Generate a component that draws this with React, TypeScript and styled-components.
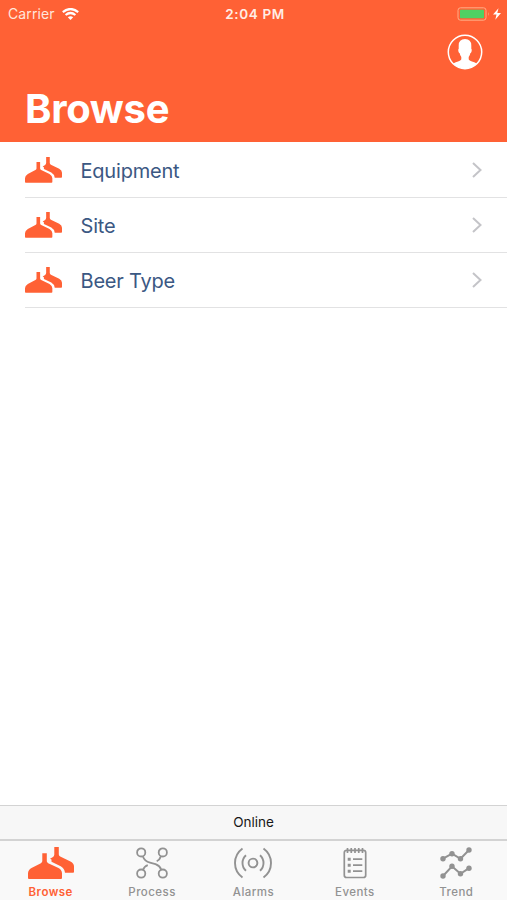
import React from "react";
import styled, { createGlobalStyle } from "styled-components";

const GlobalStyle = createGlobalStyle`
  * { box-sizing: border-box; }
  body { margin: 0; background: #fff; font-family: Inter, "Liberation Sans", sans-serif; }
`;

const Screen = styled.div`
  display: flex;
  flex-direction: column;
  height: 900px;
  width: 507px;
  overflow: hidden;
  background: #fff;
`;

const Header = styled.header`
  display: flex;
  flex-direction: column;
  height: 142px;
  flex: none;
  background: #ff6135;
  color: #fff;
`;

const StatusBar = styled.div`
  display: grid;
  grid-template-columns: 1fr auto 1fr;
  align-items: center;
  height: 27px;
  padding: 0 5px 0 8px;
`;

const Carrier = styled.div`
  display: flex;
  align-items: center;
  gap: 7px;
  font-size: 14px;
  line-height: 18px;
  letter-spacing: 0.1px;
  color: #ffe6dc;
`;

const Clock = styled.div`
  font-size: 13.5px;
  line-height: 18px;
  font-weight: 600;
  letter-spacing: 0.65px;
  color: #ffede5;
`;

const Power = styled.div`
  display: flex;
  justify-content: flex-end;
`;

const Actions = styled.div`
  display: flex;
  justify-content: flex-end;
  height: 50px;
  padding: 7px 24px 0 0;
`;

const Title = styled.h1`
  margin: 8px 0 0 25px;
  font-size: 40px;
  line-height: 48px;
  font-weight: 700;
  letter-spacing: -0.3px;
`;

const List = styled.main`
  flex: 1;
  padding: 1px 0 0 25px;
`;

const Row = styled.div`
  display: flex;
  align-items: center;
  height: 55px;
  padding-right: 24px;
  border-bottom: 1px solid #e2e2e3;
`;

const RowLabel = styled.span`
  flex: 1;
  margin-left: 18.5px;
  padding-top: 2px;
  font-size: 20px;
  line-height: 26px;
  letter-spacing: -0.2px;
  color: #3b5883;
`;

const Connection = styled.div`
  display: flex;
  align-items: center;
  justify-content: center;
  height: 34px;
  flex: none;
  padding-bottom: 1px;
  background: #f7f7f7;
  border-top: 1px solid #d3d3d3;
  font-size: 13.5px;
  color: #171717;
`;

const TabBar = styled.nav`
  display: grid;
  grid-template-columns: repeat(5, 1fr);
  height: 61px;
  flex: none;
  background: #f9f9f9;
  border-top: 2px solid #d3d3d3;
`;

const Tab = styled.div<{ $active?: boolean }>`
  display: flex;
  flex-direction: column;
  align-items: center;
  color: ${(p) => (p.$active ? "#ff6135" : "#929292")};
`;

const TabIcon = styled.div`
  display: flex;
  align-items: center;
  justify-content: center;
  height: 44px;
`;

const TabLabel = styled.span<{ $active?: boolean }>`
  font-size: 11.5px;
  line-height: 14px;
  font-weight: ${(p) => (p.$active ? 600 : 500)};
  letter-spacing: 0.45px;
`;

const Tanks = ({ width, color = "#ff6135" }: { width: number; color?: string }) => (
  <svg width={width} height={(width * 32) / 46} viewBox="0 0 46 32" fill={color}>
    <path d="M14.3 6.3H18.8V14.2Q19 15.4 20.2 16.2L30.5 21Q34 23 34 26.5V31Q34 32 33 32H1Q0 32 0 31V26.5Q0 23 3.5 21L12.9 16.2Q14.1 15.4 14.3 14.2Z" />
    <path d="M26.3 0H30.8V7.5Q31 8.8 32.2 9.5L42.5 14.5Q46 16.5 46 19.5V25Q46 25.8 45 25.8H37Q36.5 21.5 32.7 19.3L23.5 14.8V12.6L22 11.8L25 10Q26.2 9 26.3 7.5Z" />
  </svg>
);

const Wifi = () => (
  <svg width="17" height="12" viewBox="0 0 17 12" fill="none" stroke="#fff" strokeWidth="2.2">
    <path d="M0.8 4.2Q8.5-2.2 16.2 4.2M3.6 7Q8.5 3 13.4 7" />
    <path d="M8.5 12L5.8 9.2Q8.5 7.2 11.2 9.2Z" fill="#fff" stroke="none" />
  </svg>
);

const Battery = () => (
  <svg width="45" height="14" viewBox="0 0 45 14">
    <rect x="1" y="0.8" width="28" height="12.4" rx="2.5" fill="none" stroke="#ffad86" />
    <rect x="3" y="2.7" width="24" height="8.6" rx="0.8" fill="#4fd163" />
    <path d="M31 5Q32.5 7 31 9Z" fill="#ffad86" />
    <path d="M41.5 1.2L36 7.6H39.5L38.3 12.7L44 6H40.3Z" fill="#fff" />
  </svg>
);

const Profile = () => (
  <svg width="36" height="36" viewBox="0 0 36 36">
    <circle cx="18" cy="18" r="16.7" fill="none" stroke="#fff" strokeWidth="1.5" />
    <path d="M11.7 11.5Q11.7 5 18 5Q24.3 5 24.3 11.5V14.7Q25.2 15 24.5 17.8Q24.1 19 23.3 19.2Q23 21.5 21.7 23V25.3Q22 27 27.3 28.2Q29 28.8 30 29.6Q25 34.7 18 34.7Q11 34.7 6 29.6Q7 28.8 8.7 28.2Q14 27 14.3 25.3V23Q13 21.5 12.7 19.2Q11.9 19 11.5 17.8Q10.8 15 11.7 14.7Z" fill="#fff" />
  </svg>
);

const Chevron = () => (
  <svg width="12" height="18" viewBox="0 0 12 18" fill="none" stroke="#c4c4c8" strokeWidth="2">
    <path d="M2 2L9.5 9L2 16" />
  </svg>
);

const Process = () => (
  <svg width="32" height="32" viewBox="0 0 32 32" fill="none" stroke="currentColor" strokeWidth="1.8">
    <circle cx="5.2" cy="5.4" r="4.1" /><circle cx="26.8" cy="5.4" r="4.1" />
    <circle cx="5.2" cy="26.6" r="4.1" /><circle cx="26.8" cy="26.6" r="4.1" />
    <path d="M6.8 9.2Q8.5 14.2 14 15.6L19.5 17.2Q23.8 18.7 25.3 22.8M25 9.1Q23.8 12.8 20.7 14.2M7 22.9Q8.3 19.2 11.8 18.1" />
  </svg>
);

const Alarm = () => (
  <svg width="38" height="32" viewBox="0 0 38 32" fill="none" stroke="currentColor" strokeWidth="1.9">
    <circle cx="19" cy="16" r="4.4" />
    <path d="M12 8.2Q8.5 11.3 8.5 16Q8.5 20.7 12 23.8M26 8.2Q29.5 11.3 29.5 16Q29.5 20.7 26 23.8M8.5 1.5Q1 7 1 16Q1 25 8.5 30.5M29.5 1.5Q37 7 37 16Q37 25 29.5 30.5" />
  </svg>
);

const Events = () => (
  <svg width="24" height="32" viewBox="0 0 24 32" fill="none" stroke="currentColor" strokeWidth="1.7">
    <rect x="1.3" y="3.3" width="21.4" height="27.2" rx="2.3" />
    <path d="M4.5 1V6M8.25 1V6M12 1V6M15.75 1V6M19.5 1V6M10 12.2H19.3M10 18.2H19.3M10 24.2H19.3" />
    <path d="M4.7 12.2H7.7M4.7 18.2H7.7M4.7 24.2H7.7" strokeWidth="3" />
  </svg>
);

const trendUpper = [[3, 12.7], [12, 7.7], [20.5, 12.8], [29, 4]];
const trendLower = [[3, 30], [12, 20.3], [20.5, 27.8], [29, 22.2]];

const Trend = () => (
  <svg width="32" height="34" viewBox="0 0 32 34" fill="none" stroke="currentColor" strokeWidth="2">
    {[trendUpper, trendLower].map((points, i) => (
      <g key={i}>
        <polyline points={points.map((p) => p.join(",")).join(" ")} />
        {points.map(([x, y]) => (
          <circle key={x} cx={x} cy={y} r="2.7" fill="currentColor" stroke="none" />
        ))}
      </g>
    ))}
  </svg>
);

const tabs = [
  { label: "Browse", icon: <Tanks width={46} /> },
  { label: "Process", icon: <Process /> },
  { label: "Alarms", icon: <Alarm /> },
  { label: "Events", icon: <Events /> },
  { label: "Trend", icon: <Trend /> },
];

export default function App() {
  return (
    <>
      <GlobalStyle />
      <Screen>
        <Header>
          <StatusBar>
            <Carrier>Carrier <Wifi /></Carrier>
            <Clock>2:04 PM</Clock>
            <Power><Battery /></Power>
          </StatusBar>
          <Actions><Profile /></Actions>
          <Title>Browse</Title>
        </Header>
        <List>
          {["Equipment", "Site", "Beer Type"].map((label) => (
            <Row key={label}>
              <Tanks width={37} />
              <RowLabel>{label}</RowLabel>
              <Chevron />
            </Row>
          ))}
        </List>
        <Connection>Online</Connection>
        <TabBar>
          {tabs.map(({ label, icon }, i) => (
            <Tab key={label} $active={i === 0}>
              <TabIcon>{icon}</TabIcon>
              <TabLabel $active={i === 0}>{label}</TabLabel>
            </Tab>
          ))}
        </TabBar>
      </Screen>
    </>
  );
}
